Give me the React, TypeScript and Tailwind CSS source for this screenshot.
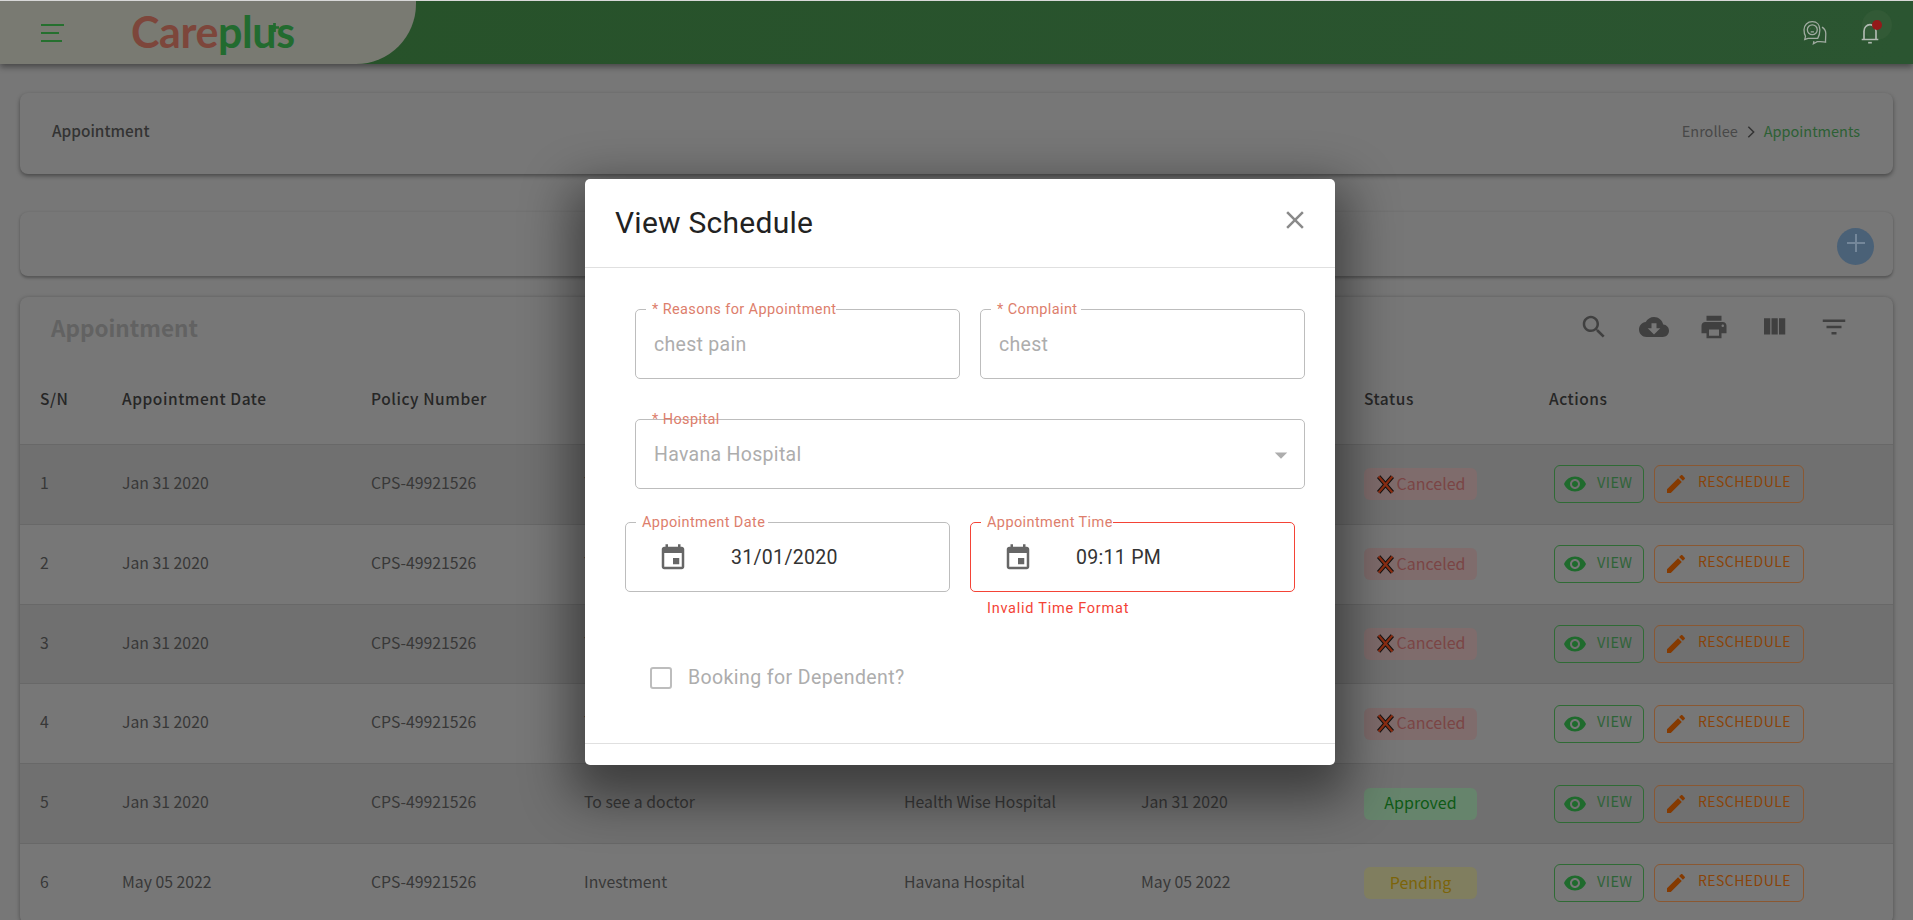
const paths = {
  search: 'M15.5 14h-.79l-.28-.27C15.41 12.59 16 11.11 16 9.5 16 5.91 13.09 3 9.5 3S3 5.91 3 9.5 5.91 16 9.5 16c1.61 0 3.09-.59 4.23-1.57l.27.28v.79l5 4.99L20.49 19l-4.99-5zm-6 0C7.01 14 5 11.99 5 9.5S7.01 5 9.5 5 14 7.01 14 9.5 11.99 14 9.5 14z',
  cloud: 'M19.35 10.04C18.67 6.59 15.64 4 12 4 9.11 4 6.6 5.64 5.35 8.04 2.34 8.36 0 10.91 0 14c0 3.31 2.69 6 6 6h13c2.76 0 5-2.24 5-5 0-2.64-2.05-4.78-4.65-4.96zM17 13l-5 5-5-5h3V9h4v4h3z',
  print: 'M19 8H5c-1.66 0-3 1.34-3 3v6h4v4h12v-4h4v-6c0-1.66-1.34-3-3-3zm-3 11H8v-5h8v5zm3-7c-.55 0-1-.45-1-1s.45-1 1-1 1 .45 1 1-.45 1-1 1zm-1-9H6v4h12V3z',
  columns: 'M10 18h5V5h-5v13zm-6 0h5V5H4v13zM16 5v13h5V5h-5z',
  filter: 'M10 18h4v-2h-4v2zM3 6v2h18V6H3zm3 7h12v-2H6v2z',
  event: 'M17 12h-5v5h5v-5zM16 1v2H8V1H6v2H5c-1.11 0-1.99.9-1.99 2L3 19c0 1.1.89 2 2 2h14c1.1 0 2-.9 2-2V5c0-1.1-.9-2-2-2h-1V1h-2zm3 18H5V8h14v11z',
  eye: 'M12 4.5C7 4.5 2.73 7.61 1 12c1.73 4.39 6 7.5 11 7.5s9.27-3.11 11-7.5c-1.73-4.39-6-7.5-11-7.5zM12 17c-2.76 0-5-2.24-5-5s2.24-5 5-5 5 2.24 5 5-2.24 5-5 5zm0-8c-1.66 0-3 1.34-3 3s1.34 3 3 3 3-1.34 3-3-1.34-3-3-3z',
  edit: 'M3 17.25V21h3.75L17.81 9.94l-3.75-3.75L3 17.25zM20.71 7.04c.39-.39.39-1.02 0-1.41l-2.34-2.34c-.39-.39-1.02-.39-1.41 0l-1.83 1.83 3.75 3.75 1.83-1.83z',
  close: 'M19 6.41L17.59 5 12 10.59 6.41 5 5 6.41 10.59 12 5 17.59 6.41 19 12 13.41 17.59 19 19 17.59 13.41 12z',
  drop: 'M7 10l5 5 5-5z',
};

function Mui({ d, className }: { d: string; className: string }) {
  return (
    <svg viewBox="0 0 24 24" fill="currentColor" className={className}>
      <path d={d} />
    </svg>
  );
}

function CancelMark() {
  return (
    <svg viewBox="0 0 18 18" className="h-[19px] w-[19px] shrink-0">
      <path d="M2.500 1.500l13 15M15.500 1.500l-13 15" stroke="#111" strokeWidth="4.2" fill="none" />
      <path d="M2.500 1.500l13 15M15.500 1.500l-13 15" stroke="#8a2d12" strokeWidth="2.2" fill="none" />
    </svg>
  );
}

function Status({ kind }: { kind: string }) {
  if (kind === 'Approved')
    return <div className="flex h-8 w-[113px] items-center justify-center rounded-md bg-[#66846c] pb-[3px] text-[16px] text-[#0f5a16]">Approved</div>;
  if (kind === 'Pending')
    return <div className="flex h-8 w-[113px] items-center justify-center rounded-md bg-[#807e5f] pb-[3px] text-[16px] text-[#7c640a]">Pending</div>;
  return (
    <div className="flex h-8 w-[113px] items-center justify-center gap-[2px] rounded-md bg-[#7f6c6c] text-[16px] text-[#7a4545]">
      <CancelMark />
      <span className="pb-[3px]">Canceled</span>
    </div>
  );
}

const rows = [
  ['1', 'Jan 31 2020', 'To see a doctor', 'Health Wise Hospital', 'Jan 31 2020', 'Canceled'],
  ['2', 'Jan 31 2020', 'To see a doctor', 'Health Wise Hospital', 'Jan 31 2020', 'Canceled'],
  ['3', 'Jan 31 2020', 'To see a doctor', 'Health Wise Hospital', 'Jan 31 2020', 'Canceled'],
  ['4', 'Jan 31 2020', 'To see a doctor', 'Health Wise Hospital', 'Jan 31 2020', 'Canceled'],
  ['5', 'Jan 31 2020', 'To see a doctor', 'Health Wise Hospital', 'Jan 31 2020', 'Approved'],
  ['6', 'May 05 2022', 'Investment', 'Havana Hospital', 'May 05 2022', 'Pending'],
];

const gridCols = 'grid grid-cols-[82px_249px_213px_320px_237px_223px_185px_1fr] items-center pl-5';

function Row({ row, odd }: { row: string[]; odd: boolean }) {
  return (
    <div className={`${gridCols} h-[79.8px] border-b border-[#686868] text-[15.8px] text-[#383838] ${odd ? 'bg-[#707070]' : ''}`}>
      <div className="mb-[3px]">{row[0]}</div>
      <div className="mb-[3px]">{row[1]}</div>
      <div className="mb-[3px]">CPS-49921526</div>
      <div className="mb-[3px]">{row[2]}</div>
      <div className="mb-[3px]">{row[3]}</div>
      <div className="mb-[3px]">{row[4]}</div>
      <Status kind={row[5]} />
      <div className="ml-[5px] flex gap-[10px]">
        <button className="flex h-[38px] w-[90px] items-center rounded-md border border-[#2f6b35] pl-[8px] text-[#2f6338]">
          <Mui d={paths.eye} className="h-6 w-6 shrink-0 text-[#1f6b2d]" />
          <span className="mb-[5px] ml-[10px] text-[14.5px] tracking-[0.4px]">VIEW</span>
        </button>
        <button className="flex h-[38px] w-[150px] items-center rounded-md border border-[#8a5832] pl-[9px] text-[#8a4409]">
          <Mui d={paths.edit} className="h-6 w-6 shrink-0 text-[#853a00]" />
          <span className="mb-[5px] ml-[10px] text-[14px] tracking-[0.45px]">RESCHEDULE</span>
        </button>
      </div>
    </div>
  );
}

function Field({
  label,
  notch,
  error = false,
  className,
  children,
}: {
  label: string;
  notch: string;
  error?: boolean;
  className: string;
  children: React.ReactNode;
}) {
  return (
    <div className={`relative h-[70px] rounded-[5px] border pt-px ${error ? 'border-[#f44336]' : 'border-[#bdbdbd]'} ${className}`}>
      <span className={`absolute -top-px left-[10px] h-[2px] bg-white ${notch}`} />
      <span className="absolute -top-[10px] left-4 whitespace-nowrap text-[14.5px] leading-5 tracking-[0.4px] text-[#dd7e6c]">{label}</span>
      {children}
    </div>
  );
}

function Modal() {
  return (
    <div className="absolute inset-0 pl-[585px] pt-[179px] font-['Roboto',sans-serif]">
      <div className="h-[586px] w-[750px] rounded-[5px] bg-white shadow-[0_20px_50px_14px_rgba(0,0,0,0.45)]">
        <div className="flex h-[89px] items-center justify-between border-b border-[#e0e0e0] pl-[30px] pr-[25px]">
          <h2 className="text-[30px] font-[450] leading-none tracking-[0.25px] text-[#222]">View Schedule</h2>
          <Mui d={paths.close} className="mb-[6px] h-[30px] w-[30px] text-[#8a8a8a]" />
        </div>
        <div className="h-[476px] border-b border-[#e0e0e0] pl-[50px] pr-[30px] pt-[41px]">
          <div className="flex gap-5">
            <Field label="* Reasons for Appointment" notch="w-[190px]" className="w-[325px]">
              <div className="flex h-full items-center pl-[18px] text-[19.5px] tracking-[0.3px] text-[#adadad]">chest pain</div>
            </Field>
            <Field label="* Complaint" notch="w-[90px]" className="w-[325px]">
              <div className="flex h-full items-center pl-[18px] text-[19.5px] tracking-[0.3px] text-[#adadad]">chest</div>
            </Field>
          </div>
          <Field label="* Hospital" notch="w-0" className="mt-[40px] w-full">
            <div className="flex h-full items-center justify-between pl-[18px] pr-[8px] text-[19.5px] tracking-[0.3px] text-[#adadad]">
              Havana Hospital
              <Mui d={paths.drop} className="h-[30px] w-[30px]" />
            </div>
          </Field>
          <div className="-ml-[10px] mt-[33px] flex gap-5">
            <Field label="Appointment Date" notch="w-[132px]" className="w-[325px]">
              <div className="flex h-full items-center text-[19.5px] tracking-[0.3px] text-[#333]">
                <Mui d={paths.event} className="ml-[32px] h-[30px] w-[30px] text-[#666]" />
                <span className="ml-[43px]">31/01/2020</span>
              </div>
            </Field>
            <div className="w-[325px]">
              <Field label="Appointment Time" notch="w-[132px]" error className="w-full">
                <div className="flex h-full items-center text-[19.5px] tracking-[0.3px] text-[#333]">
                  <Mui d={paths.event} className="ml-[32px] h-[30px] w-[30px] text-[#666]" />
                  <span className="ml-[43px]">09:11 PM</span>
                </div>
              </Field>
              <div className="mt-[7px] pl-[17px] text-[14.5px] leading-5 tracking-[0.75px] text-[#f44336]">Invalid Time Format</div>
            </div>
          </div>
          <div className="ml-[15px] mt-[48px] flex items-center">
            <span className="h-[22px] w-[22px] rounded-[3px] border-2 border-[#bdbdbd]" />
            <span className="ml-4 text-[19.5px] leading-none tracking-[0.4px] text-[#adadad]">Booking for Dependent?</span>
          </div>
        </div>
      </div>
    </div>
  );
}

function TopBar() {
  return (
    <header className="mt-px flex h-[63px] justify-between bg-gradient-to-r from-[#265128] to-[#2b5531] pr-[31px] shadow-[0_3px_6px_rgba(0,0,0,0.4)]">
      <div className="flex h-full w-[416px] items-center rounded-br-[60px] bg-[#797a72]">
        <div className="ml-[41px] flex w-[23px] flex-col gap-[6px]">
          <span className="h-[2px] w-[23px] bg-[#26702f]" />
          <span className="h-[2px] w-[18px] bg-[#26702f]" />
          <span className="h-[2px] w-[21px] bg-[#26702f]" />
        </div>
        <div className="relative mb-[2px] ml-[67px] font-['Lato',sans-serif] text-[43px] font-bold leading-none tracking-[-0.4px]">
          <span className="text-[#7d463b]">Care</span>
          <span className="text-[#226b2f]">plus</span>
          <svg viewBox="0 0 10 10" className="absolute left-[139px] top-[13px] h-[9px] w-[9px] text-[#226b2f]" fill="currentColor">
            <path d="M3.500 0h3v3.500H10v3H6.500V10h-3V6.500H0v-3h3.500z" />
          </svg>
        </div>
      </div>
      <div className="flex items-center gap-[29px]">
        <svg viewBox="0 0 26 26" fill="none" stroke="#a0aba1" strokeWidth="1.2" className="h-[28px] w-[28px]">
          <path d="M10.500 2.500c4.400 0 7 3 7 7.500 0 4.600-2 8-2 8h-9l-3 1 .7-3C3 14 2.800 12 2.800 10c0-4.500 3.300-7.500 7.700-7.500z" />
          <circle cx="10.500" cy="10" r="4.600" />
          <path d="M8.700 9h.1M12.200 9h.1M9 12h3" />
          <path d="M19.500 7.500c2.500 1.500 3.500 3.500 3.500 6 0 3-.3 5-.2 8-2.500-.8-5-.6-7.800-.5l-3.500 2 .5-2.500" />
        </svg>
        <div className="relative">
          <span className="absolute -right-[10px] -top-[11px] h-[30px] w-[30px] rounded-full bg-[#325a36]" />
          <svg viewBox="0 0 24 26" fill="none" stroke="#b0bab1" strokeWidth="1.8" className="relative h-[24px] w-[24px]">
            <path d="M3 20h18M5.500 20V11c0-4 3-7 6.500-7s6.500 3 6.500 7v9" />
            <path d="M10 23.500h4" />
          </svg>
          <span className="absolute right-0 -top-px h-[10px] w-[10px] rounded-full bg-[#941a1a]" />
        </div>
      </div>
    </header>
  );
}

export default function App() {
  return (
    <div className="relative h-[920px] overflow-hidden bg-[#777] font-['Noto_Sans_CJK_JP','Noto_Sans',sans-serif] text-[#333]">
      <div className="absolute left-0 top-0 h-px w-full bg-[#d8d8d8]" />
      <TopBar />
      <main className="px-5 pt-[29px]">
        <section className="flex h-[81px] items-center justify-between rounded-lg bg-[#777] pb-[6px] pl-8 pr-[33px] shadow-[0_2px_4px_rgba(0,0,0,0.4)]">
          <div className="text-[15.4px] font-medium text-[#333]">Appointment</div>
          <div className="flex items-center text-[14.5px] text-[#484848]">
            Enrollee
            <svg viewBox="0 0 24 24" fill="none" stroke="#333" strokeWidth="2.2" className="mx-[5px] mt-[2px] h-[16px] w-[16px]">
              <path d="M8 4l8 8-8 8" />
            </svg>
            <span className="text-[#2d6034]">Appointments</span>
          </div>
        </section>
        <section className="mt-[38px] flex h-[65px] items-center justify-end rounded-lg border-b border-[#5a5a5a] bg-[#777] pr-[19px] shadow-[0_1px_3px_rgba(0,0,0,0.3)]">
          <div className="mt-1 flex h-[37px] w-[37px] items-center justify-center rounded-full bg-[#4a6177] text-[#74879a]">
            <svg viewBox="0 0 24 24" fill="none" stroke="currentColor" strokeWidth="2" className="mb-[6px] h-[24px] w-[24px]">
              <path d="M12 3v18M3 12h18" />
            </svg>
          </div>
        </section>
        <section className="mt-5 rounded-lg bg-[#777] shadow-[0_1px_4px_rgba(0,0,0,0.35)]">
          <div className="flex h-[60px] items-center justify-between pl-[31px] pr-[44px]">
            <h1 className="mt-px text-[22.5px] font-bold text-[#626262]">Appointment</h1>
            <div className="flex items-center gap-[30px] text-[#404040]">
              <Mui d={paths.search} className="h-[30px] w-[30px]" />
              <Mui d={paths.cloud} className="h-[30px] w-[30px]" />
              <Mui d={paths.print} className="h-[30px] w-[30px]" />
              <Mui d={paths.columns} className="h-[30px] w-[30px]" />
              <Mui d={paths.filter} className="h-[30px] w-[30px]" />
            </div>
          </div>
          <div className={`${gridCols} h-[88px] border-b border-[#686868] pb-1 text-[15.5px] font-medium tracking-[0.55px] text-[#262626]`}>
            <div>S/N</div>
            <div>Appointment Date</div>
            <div>Policy Number</div>
            <div />
            <div />
            <div />
            <div>Status</div>
            <div>Actions</div>
          </div>
          {rows.map((row, i) => (
            <Row key={row[0]} row={row} odd={i % 2 === 0} />
          ))}
        </section>
      </main>
      <Modal />
    </div>
  );
}
